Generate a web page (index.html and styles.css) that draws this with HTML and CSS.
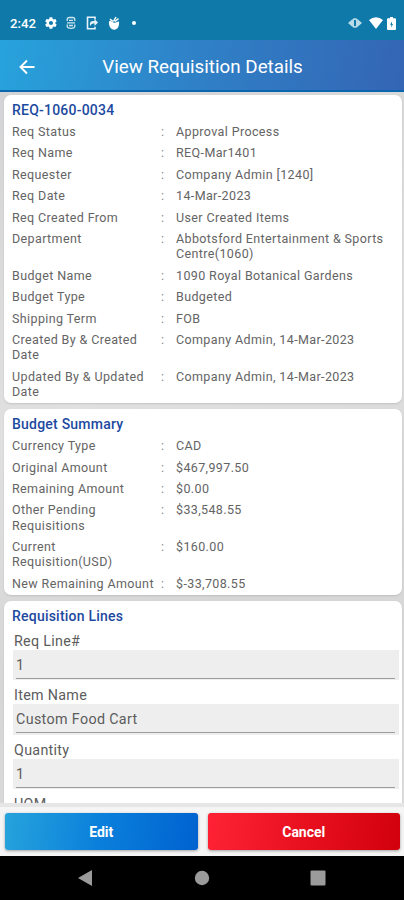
FILE: index.html
```html
<!DOCTYPE html>
<html lang="en">
  <head>
    <meta charset="UTF-8" />
    <meta name="viewport" content="width=device-width, initial-scale=1.0" />
    <title>View Requisition Details</title>
    <link rel="stylesheet" href="styles.css">
  </head>
  <body>
    <div class="status-bar">
      <span class="clock">2:42</span>
      <!-- settings -->
      <svg class="gear" width="14" height="14" viewBox="0 0 24 24"><path fill="#fff" fill-rule="evenodd" d="M19.4 13a7.500 7.500 0 0 0 0-2l2.100-1.600a.5.5 0 0 0 .1-.6l-2-3.500a.5.5 0 0 0-.6-.2l-2.500 1a7.300 7.300 0 0 0-1.700-1l-.4-2.600a.5.5 0 0 0-.5-.4h-4a.5.5 0 0 0-.5.4L9 5.100a7.700 7.700 0 0 0-1.700 1l-2.500-1a.5.5 0 0 0-.6.200l-2 3.500a.5.5 0 0 0 .1.600L4.500 11a8 8 0 0 0 0 2l-2.200 1.600a.5.5 0 0 0-.1.600l2 3.500c.1.200.4.300.6.200l2.500-1a7.300 7.300 0 0 0 1.700 1l.4 2.600c0 .3.300.4.500.4h4c.3 0 .5-.2.5-.4l.4-2.600a7.700 7.700 0 0 0 1.700-1l2.500 1c.2.100.5 0 .6-.2l2-3.500a.5.5 0 0 0-.1-.6zM12 15.500a3.500 3.500 0 1 1 0-7 3.500 3.500 0 0 1 0 7z"/></svg>
      <svg class="chip" width="10" height="14" viewBox="0 0 10 14"><path d="M1.200 5V3.500Q1.200 1.500 3.500 1.500h3q2.300 0 2.300 2V5M1 6.800h8M1.200 8.500V10q0 2.300 3.800 2.300T8.800 10V8.500M3 4.300h4M3 9.500h4" fill="none" stroke="#cfe6f1" stroke-width="1.300"/></svg>
      <svg class="screen" width="13" height="14" viewBox="0 0 13 14"><path d="M9 3.500V1.200H1.500v11.600H9v-2" fill="none" stroke="#e6f2f8" stroke-width="1.600"/><path d="M4 10V7.500Q4 5 7 5h1.500V3L12 6.500 8.500 10V7.500H7Q5.500 7.500 4 10z" fill="#e6f2f8"/></svg>
      <svg class="drop" width="12" height="14" viewBox="0 0 12 14"><path d="M1 5.500c1.500-1 2.500 0 4.500 1s3.500-1.500 5.500-1c.6 4-1.300 8.300-4.800 8.300S.5 9.500 1 5.500z" fill="#fff"/><path d="M2 3.200l3 2.300M5.500 5.500L8 1M7 5.500l3.500-3" stroke="#fff" stroke-width="1.500"/></svg>
      <span class="dot"></span>
      <span class="spacer"></span>
      <svg class="eye" width="14" height="12" viewBox="0 0 14 12"><path d="M0 6l4-3.500v7zM14 6l-4-3.500v7z" fill="#b9dbe9"/><rect x="4" y="1.200" width="6" height="9.600" rx="2.500" fill="#b9dbe9"/><path d="M7 3v6" stroke="#0f7aa9" stroke-width="2"/></svg>
      <svg class="wifi" width="14" height="12" viewBox="0 0 14 12"><path d="M0 3Q7-2.500 14 3L7 12z" fill="#fff"/></svg>
      <svg class="battery" width="9" height="13" viewBox="0 0 9 13"><path d="M3 0h3v1.300h2q1 0 1 1V12q0 1-1 1H1q-1 0-1-1V2.300q0-1 1-1h2z" fill="#fff"/><path d="M5 4.500L3 7.800h1.300V10.500L6 7H5z" fill="#0f7aa9"/></svg>
    </div>

    <header>
      <svg class="back" width="16" height="16" viewBox="0 0 16 16"><path d="M15.500 8H2M8 1.500L1.500 8 8 14.500" fill="none" stroke="#fff" stroke-width="1.900"/></svg>
      <h1>View Requisition Details</h1>
    </header>

    <main>
      <section class="card">
        <h2>REQ-1060-0034</h2>
        <dl>
          <dt>Req Status</dt><dd>Approval Process</dd>
          <dt>Req Name</dt><dd>REQ-Mar1401</dd>
          <dt>Requester</dt><dd>Company Admin [1240]</dd>
          <dt>Req Date</dt><dd>14-Mar-2023</dd>
          <dt>Req Created From</dt><dd>User Created Items</dd>
          <dt>Department</dt><dd>Abbotsford Entertainment &amp; Sports Centre(1060)</dd>
          <dt>Budget Name</dt><dd>1090 Royal Botanical Gardens</dd>
          <dt>Budget Type</dt><dd>Budgeted</dd>
          <dt>Shipping Term</dt><dd>FOB</dd>
          <dt>Created By &amp; Created Date</dt><dd>Company Admin, 14-Mar-2023</dd>
          <dt>Updated By &amp; Updated Date</dt><dd>Company Admin, 14-Mar-2023</dd>
        </dl>
      </section>

      <section class="card">
        <h2>Budget Summary</h2>
        <dl>
          <dt>Currency Type</dt><dd>CAD</dd>
          <dt>Original Amount</dt><dd>$467,997.50</dd>
          <dt>Remaining Amount</dt><dd>$0.00</dd>
          <dt>Other Pending Requisitions</dt><dd>$33,548.55</dd>
          <dt>Current Requisition(USD)</dt><dd>$160.00</dd>
          <dt>New Remaining Amount</dt><dd>$-33,708.55</dd>
        </dl>
      </section>

      <section class="card lines">
        <h2>Requisition Lines</h2>
        <div class="field"><label>Req Line#</label><div class="value"><span>1</span></div></div>
        <div class="field"><label>Item Name</label><div class="value"><span>Custom Food Cart</span></div></div>
        <div class="field"><label>Quantity</label><div class="value"><span>1</span></div></div>
        <div class="field"><label>UOM</label><div class="value"></div></div>
      </section>
    </main>

    <div class="actions">
      <button class="btn edit">Edit</button>
      <button class="btn cancel">Cancel</button>
    </div>

    <nav>
      <svg width="16" height="16" viewBox="0 0 16 16"><path d="M14 0v16L0 8z" fill="#9b9b9b"/></svg>
      <svg width="16" height="16" viewBox="0 0 16 16"><circle cx="8" cy="8" r="7.200" fill="#9b9b9b"/></svg>
      <svg width="16" height="16" viewBox="0 0 16 16"><rect x=".5" y=".5" width="15" height="15" rx="1" fill="#9b9b9b"/></svg>
    </nav>
  </body>
</html>
```

FILE: styles.css
```css
* {
  box-sizing: border-box;
}

body {
  margin: 0;
  height: 900px;
  display: flex;
  flex-direction: column;
  overflow: hidden;
  font-family: Roboto, sans-serif;
  background-color: #dcdcdd;
}

.status-bar {
  height: 40px;
  flex: none;
  display: flex;
  align-items: center;
  padding: 6px 9px 0 10px;
  background-color: #0f7aa9;
  color: #fff;
}

.clock {
  width: 34px;
  font-size: 13.2px;
  font-weight: 500;
}

.chip { margin-left: 8px; }
.screen { margin-left: 10px; }
.drop { margin-left: 9px; }

.dot {
  width: 4px;
  height: 4px;
  margin-left: 12px;
  border-radius: 50%;
  background: #fff;
}

.spacer { flex: 1; }
.eye { margin-right: 7px; }
.battery { margin: 0 -1px 0 4px; }

header {
  height: 52px;
  flex: none;
  display: flex;
  align-items: center;
  padding: 3px 19px 0;
  background: linear-gradient(100deg, #27a3dc, #2f83c8 45%, #3465b5);
  border-bottom: 2px solid #0b66b0;
}

h1 {
  flex: 1;
  margin: 0 15px 0 0;
  text-align: center;
  font-size: 18.8px;
  font-weight: 400;
  color: #fff;
}

main {
  height: 715px;
  flex: none;
  padding: 3px 2px 0 4px;
  overflow: hidden;
  display: flex;
  flex-direction: column;
  gap: 6px;
  background: linear-gradient(160deg, #d4d4d6, #e0e0e0 40%, #d6d6d6 70%, #dedede);
  border-bottom: 4px solid #e6e6e6;
}

.card {
  flex: none;
  padding: 7px 8px 4px;
  background: #fff;
  border-radius: 7px;
  box-shadow: 0 1px 2px rgba(0, 0, 0, 0.12);
}

h2 {
  margin: 0 0 6px;
  font-size: 14px;
  line-height: 16px;
  font-weight: 500;
  letter-spacing: 0.22px;
  color: #1d4a9f;
}

dl {
  display: grid;
  grid-template-columns: 149px 1fr;
  row-gap: 6.2px;
  margin: 0;
  font-size: 12.5px;
  line-height: 15.23px;
  letter-spacing: 0.38px;
  color: #646464;
}

dt { padding-right: 5px; }

dd {
  display: flex;
  margin: 0;
}

dd::before {
  content: ":";
  flex: none;
  width: 15px;
  color: #8a8a8a;
}

.lines {
  padding-right: 3px;
}

.lines h2 {
  margin-bottom: 8px;
}

.field {
  margin-bottom: 6px;
  color: #5c5c5c;
}

label {
  display: block;
  padding-left: 2px;
  font-size: 14.3px;
  line-height: 18px;
  letter-spacing: 0.3px;
}

.value {
  height: 30.4px;
  margin-left: 1px;
  padding: 0 4px 0 3px;
  background: #eee;
  font-size: 14.3px;
  line-height: 30px;
  letter-spacing: 0.35px;
}

.value span {
  display: block;
  height: 29px;
  border-bottom: 1px solid #9c9c9c;
}

.actions {
  height: 49px;
  flex: none;
  display: flex;
  gap: 10px;
  padding: 6px 4px 6px 5px;
  background: #f5f5f5;
}

.btn {
  flex: 1;
  height: 37px;
  border: none;
  border-radius: 3px;
  color: #fff;
  font-family: Roboto, sans-serif;
  font-size: 14px;
  font-weight: 700;
  box-shadow: 0 1px 3px rgba(0, 0, 0, 0.35);
}

.edit { background: linear-gradient(100deg, #27a3dc, #0a7fdb 50%, #0062d0); }
.cancel { background: linear-gradient(100deg, #ff2236, #e8101f 50%, #d2000c); }

nav {
  flex: 1;
  display: flex;
  align-items: center;
  justify-content: center;
  gap: 100px;
  background: #000;
}
```
